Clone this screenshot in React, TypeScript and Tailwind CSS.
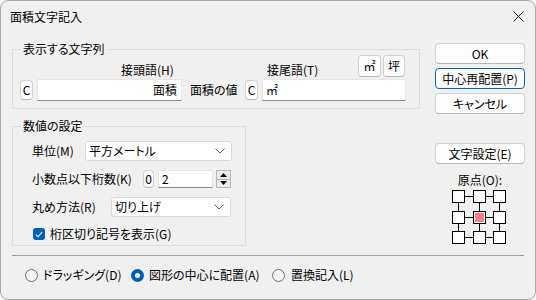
import React from "react";

const Btn = ({ children, className = "" }: { children: React.ReactNode; className?: string }) => (
  <div
    className={`flex items-center justify-center shrink-0 whitespace-nowrap bg-[#fdfdfd] border border-[#d0d0d0] border-b-[#b8b8b8] rounded-[4px] ${className}`}
  >
    {children}
  </div>
);

const Chevron = () => (
  <svg width="10" height="6" viewBox="0 0 10 6" className="shrink-0">
    <polyline points="0.5,0.5 5,5 9.5,0.5" fill="none" stroke="#606060" strokeWidth="1" />
  </svg>
);

const Radio = ({ checked }: { checked?: boolean }) =>
  checked ? (
    <div className="w-[13px] h-[13px] rounded-full bg-[#005fb8] flex items-center justify-center shrink-0">
      <div className="w-[5px] h-[5px] rounded-full bg-white" />
    </div>
  ) : (
    <div className="w-[13px] h-[13px] rounded-full border border-[#6e6e6e] bg-[#f7f7f7] shrink-0" />
  );

const OriginGrid = () => {
  const p = [0, 20.5, 41];
  const sz = 12;
  return (
    <svg width="54" height="54" viewBox="0 0 54 54" shapeRendering="crispEdges">
      {p.map((y, i) => (
        <line key={"h" + i} x1="0" x2="53" y1={Math.round(y) + 6.5} y2={Math.round(y) + 6.5} stroke="#000" strokeWidth="1" />
      ))}
      {p.map((x, i) => (
        <line key={"v" + i} y1="0" y2="53" x1={Math.round(x) + 6.5} x2={Math.round(x) + 6.5} stroke="#000" strokeWidth="1" />
      ))}
      {p.map((y, r) =>
        p.map((x, c) => (
          <rect
            key={`${r}-${c}`}
            x={Math.round(x) + 0.5}
            y={Math.round(y) + 0.5}
            width={sz}
            height={sz}
            fill="#fff"
            stroke="#000"
            strokeWidth="1"
          />
        ))
      )}
      <rect x={Math.round(p[1]) + 2} y={Math.round(p[1]) + 2} width="9" height="9" fill="#ff8080" />
    </svg>
  );
};

export default function App() {
  return (
    <div className="w-[536px] h-[300px] bg-[#f0f0f0] border border-[#a8a8a8] rounded-[8px] overflow-hidden flex flex-col font-['Noto_Sans_CJK_JP',sans-serif] [font-feature-settings:'palt'] text-[12px] leading-[14px] text-black whitespace-nowrap">
      {/* Title bar */}
      <div className="h-[31px] flex items-center justify-between pl-[9px] pr-[11px] shrink-0">
        <span>面積文字記入</span>
        <svg width="11" height="11" viewBox="0 0 11 11">
          <path d="M0.5 0.5 L10.5 10.5 M10.5 0.5 L0.5 10.5" stroke="#1a1a1a" strokeWidth="1" fill="none" />
        </svg>
      </div>

      {/* Body */}
      <div className="flex pt-[10px] pl-[11px] shrink-0">
        {/* Left column */}
        <div className="flex flex-col w-[408px] shrink-0">
          <fieldset className="border border-[#dcdcdc] pb-[7px]">
            <legend className="ml-[8px] px-[2px] leading-[14px]">表示する文字列</legend>
            <div className="flex items-end h-[21px]">
              <div className="w-[254px] pl-[108px] shrink-0">接頭語(H)</div>
              <div className="w-[91px] shrink-0">接尾語(T)</div>
              <Btn className="w-[23px] h-[22px]">㎡</Btn>
              <Btn className="w-[22px] h-[22px] ml-[2px]">坪</Btn>
            </div>
            <div className="flex items-center h-[22px] mt-[2px]">
              <Btn className="w-[13px] h-[20px] ml-[7px]">C</Btn>
              <div className="w-[145px] h-[22px] ml-[4px] shrink-0 bg-white border border-[#e5e5e5] border-b-[#8a8a8a] flex items-center justify-end pr-[4px]">
                面積
              </div>
              <div className="w-[63px] pl-[8px] shrink-0">面積の値</div>
              <Btn className="w-[13px] h-[20px]">C</Btn>
              <div className="w-[144px] h-[22px] ml-[4px] shrink-0 bg-white border border-[#e5e5e5] border-b-[#8a8a8a] flex items-center pl-[3px]">
                ㎡
              </div>
            </div>
          </fieldset>

          <fieldset className="border border-[#dcdcdc] w-[234px] mt-[10px] pb-[4px]">
            <legend className="ml-[8px] px-[2px] leading-[14px]">数値の設定</legend>
            <div className="flex items-center h-[20px] mt-[8px] pl-[19px]">
              <div className="w-[53px] shrink-0">単位(M)</div>
              <div className="w-[147px] h-[20px] shrink-0 bg-white border border-[#d9d9d9] rounded-[3px] flex items-center justify-between pl-[3px] pr-[6px]">
                <span>平方メートル</span>
                <Chevron />
              </div>
            </div>
            <div className="flex items-center h-[18px] mt-[9px] pl-[19px]">
              <div className="w-[111px] shrink-0">小数点以下桁数(K)</div>
              <Btn className="w-[11px] h-[18px] rounded-[3px]">0</Btn>
              <div className="w-[55px] h-[18px] ml-[4px] shrink-0 bg-white border border-[#e5e5e5] border-b-[#8a8a8a] flex items-center pl-[3px]">
                2
              </div>
              <div className="w-[15px] h-[18px] ml-[3px] shrink-0 border border-[#b5b5b5] bg-[#ebebeb] flex flex-col">
                <div className="flex-1 flex items-center justify-center border-b border-[#b5b5b5]">
                  <svg width="7" height="4" viewBox="0 0 7 4">
                    <polygon points="3.5,0 7,4 0,4" fill="#000" />
                  </svg>
                </div>
                <div className="flex-1 flex items-center justify-center">
                  <svg width="7" height="4" viewBox="0 0 7 4">
                    <polygon points="0,0 7,0 3.5,4" fill="#000" />
                  </svg>
                </div>
              </div>
            </div>
            <div className="flex items-center h-[20px] mt-[9px] pl-[19px]">
              <div className="w-[79px] shrink-0">丸め方法(R)</div>
              <div className="w-[120px] h-[20px] shrink-0 bg-white border border-[#d9d9d9] rounded-[3px] flex items-center justify-between pl-[3px] pr-[6px]">
                <span>切り上げ</span>
                <Chevron />
              </div>
            </div>
            <div className="flex items-center h-[14px] mt-[10px] pl-[20px]">
              <div className="w-[12px] h-[12px] shrink-0 rounded-[3px] bg-[#005fb8] flex items-center justify-center">
                <svg width="8" height="7" viewBox="0 0 8 7">
                  <polyline points="0.8,3.6 3,5.8 7.2,1" fill="none" stroke="#fff" strokeWidth="1.1" />
                </svg>
              </div>
              <span className="ml-[5px]">桁区切り記号を表示(G)</span>
            </div>
          </fieldset>
        </div>

        {/* Right column */}
        <div className="flex flex-col items-center w-[90px] ml-[15px] pt-[1px] shrink-0">
          <Btn className="w-[90px] h-[21px]">OK</Btn>
          <div className="w-[90px] h-[21px] mt-[4px] flex items-center justify-center bg-[#fdfdfd] border-[1.5px] border-[#0067c0] rounded-[4px]">
            中心再配置(P)
          </div>
          <Btn className="w-[90px] h-[21px] mt-[4px]">キャンセル</Btn>
          <Btn className="w-[90px] h-[21px] mt-[29px]">文字設定(E)</Btn>
          <div className="mt-[9px] text-center">原点(O):</div>
          <div className="mt-[3px] mr-[2px]">
            <OriginGrid />
          </div>
        </div>
      </div>

      {/* Separator */}
      <div className="mx-[11px] mt-[9px] h-px bg-[#a0a0a0] shrink-0" />

      {/* Radios */}
      <div className="flex items-center h-[14px] mt-[12px] pl-[24px] shrink-0">
        <div className="flex items-center w-[106px] shrink-0">
          <Radio />
          <span className="ml-[5px]">ドラッギング(D)</span>
        </div>
        <div className="flex items-center w-[141px] shrink-0">
          <Radio checked />
          <span className="ml-[5px]">図形の中心に配置(A)</span>
        </div>
        <div className="flex items-center shrink-0">
          <Radio />
          <span className="ml-[6px]">置換記入(L)</span>
        </div>
      </div>
    </div>
  );
}
